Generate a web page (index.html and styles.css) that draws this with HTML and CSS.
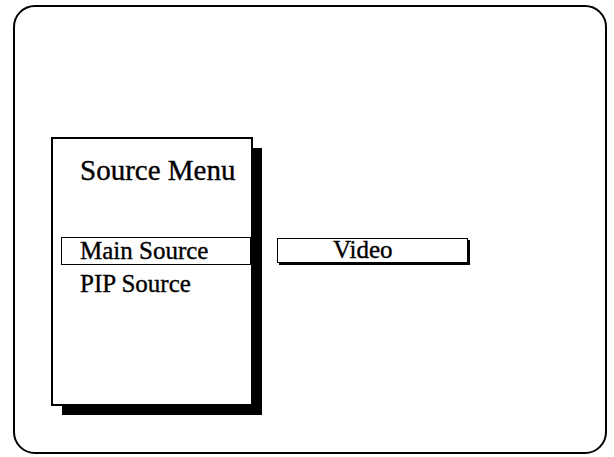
FILE: index.html
```html
<!DOCTYPE html>
<html lang="en">
<head>
  <meta charset="UTF-8">
  <meta name="viewport" content="width=device-width, initial-scale=1.0">
  <title>Source Menu</title>
  <link rel="stylesheet" href="styles.css">
</head>
<body>
  <div class="screen">
    <div class="menu">
      <div class="menu-title">Source Menu</div>
      <div class="menu-item selected">Main Source</div>
      <div class="menu-item">PIP Source</div>
    </div>

    <div class="option">Video</div>
  </div>
</body>
</html>
```

FILE: styles.css
```css
body {
  margin: 0;
  background: #ffffff;
  font-family: "Liberation Serif", "Times New Roman", serif;
  color: #000000;
  -webkit-text-stroke: 0.35px #000;
}

.screen {
  box-sizing: border-box;
  width: 594px;
  height: 449px;
  margin: 5px 0 0 13px;
  padding: 130px 0 0 36px;
  border: 2px solid #000;
  border-radius: 22px;
  display: flex;
  align-items: flex-start;
}

.menu {
  box-sizing: border-box;
  width: 202px;
  height: 269px;
  padding: 17px 0 0 8px;
  border: 2px solid #000;
  background: #fff;
  box-shadow: 10px 10px 0 -1px #000;
}

.menu-title {
  font-size: 29px;
  line-height: 29px;
  padding-left: 19px;
}

.menu-item {
  font-size: 25px;
  line-height: 24px;
  padding-left: 19px;
  margin-top: 7px;
}

.menu-item.selected {
  margin-top: 52px;
  padding: 2px 0 2px 18px;
  line-height: 22px;
  border: 1px solid #000;
}

.option {
  box-sizing: border-box;
  width: 191px;
  height: 25px;
  margin: 101px 0 0 24px;
  padding-left: 55px;
  border: 1px solid #000;
  box-shadow: 2px 2px 0 #000;
  font-size: 25px;
  line-height: 21px;
}
```
